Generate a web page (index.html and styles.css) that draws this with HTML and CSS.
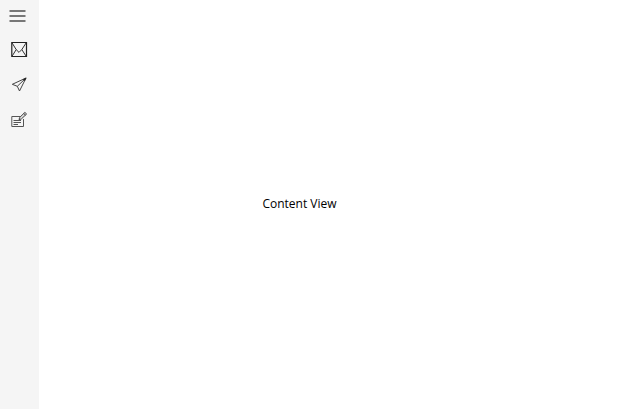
FILE: index.html
```html
<!DOCTYPE html>
<html lang="en">
<head>
<meta charset="utf-8">
<title>Content View</title>
<link rel="stylesheet" href="styles.css">
</head>
<body>
<nav class="rail" aria-label="Mail">
  <button class="toggle" type="button" aria-label="Menu">
    <svg width="17" height="12" viewBox="0 0 17 12"><path d="M0.5 1H16.5M0.5 6H16.5M0.5 11H16.5" stroke="#777" stroke-width="2"/></svg>
  </button>
  <button class="item" type="button" aria-label="Inbox">
    <svg width="17" height="17" viewBox="0 0 17 17" fill="none" stroke="#222"><path d="M0.8 1.5H15.5V15.5H0.8Z" stroke-width="1.2"/><path d="M1 1.8L5.2 8.6L8 11.4L10.8 8.6L15.2 1.8M1.2 15L5.2 8.6M10.8 8.6L15 15" stroke="#333"/></svg>
  </button>
  <button class="item" type="button" aria-label="Sent">
    <svg width="17" height="17" viewBox="0 0 17 17" fill="none" stroke="#444"><path d="M15 2L1.3 8.3L6.3 10.3L8.5 15Z"/><path d="M15 2L6.3 10.3"/><path d="M15.6 1.4L11.8 3.2L13.9 5Z" fill="#222" stroke="none"/></svg>
  </button>
  <button class="item" type="button" aria-label="Drafts">
    <svg width="17" height="17" viewBox="0 0 17 17" fill="none" stroke="#555"><path d="M9 5.5H0.8V15.5H12.5V8"/><path d="M2.5 9.5H10M2.5 11.5H10M2.5 13.5H7" /><path d="M8 8.6L8.7 6.4L13.9 1.4L15.6 3L10.3 8Z" fill="#ddd" stroke="#444"/><path d="M12.7 2.5L14.5 4.1" stroke="#444"/></svg>
  </button>
</nav>
<main class="content"><p class="label">Content View</p></main>
</body>
</html>
```

FILE: styles.css
```css
body {
  display: flex;
  min-height: 100vh;
  margin: 0;
  background: #fff;
  color: #000;
  font: 12px/16px "Open Sans", "Noto Sans", sans-serif;
}

.rail {
  display: flex;
  flex-direction: column;
  align-items: flex-start;
  flex: 0 0 39px;
  background: #f5f5f5;
}

.toggle,
.item {
  display: flex;
  align-items: center;
  justify-content: center;
  width: 39px;
  height: 35px;
  padding: 0;
  border: 0;
  background: none;
}

.toggle {
  width: 35px;
  height: 32px;
}

.content {
  display: flex;
  flex: 1;
  align-items: center;
  justify-content: center;
  padding: 0 68px 2px 0;
}

.label {
  margin: 0;
}
```
